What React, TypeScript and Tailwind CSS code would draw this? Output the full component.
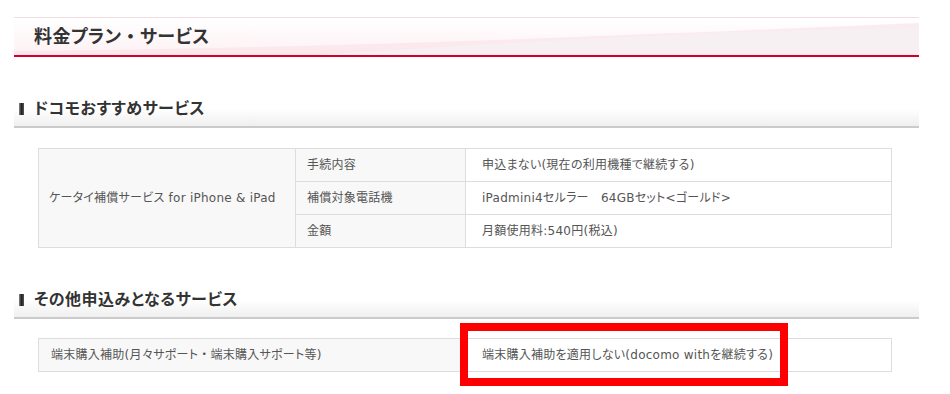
import type { ReactNode } from "react";

const font = "font-['DejaVu_Sans','Noto_Sans_CJK_JP',sans-serif]";

// middle dot keeps its full width like the reference font
function Dot() {
  return <span className="[font-feature-settings:normal]">・</span>;
}

function PageTitle({ children }: { children: ReactNode }) {
  return (
    <div className="relative h-[40px] overflow-hidden border-t border-b-2 border-t-[#f3dde3] border-b-[#d0002a] bg-gradient-to-b from-white to-[#fdf1f4]">
      {/* pink wave on the right */}
      <svg
        className="absolute inset-0 h-full w-full"
        viewBox="0 0 905 37"
        preserveAspectRatio="none"
      >
        <path d="M0 33 C300 30 560 20 905 5 L905 37 L0 37 Z" fill="#f8e1e7" opacity="0.6" />
        <path d="M300 37 C540 22 700 12 905 10 L905 37 Z" fill="#f6f1f3" opacity="0.8" />
      </svg>
      <h1 className="relative flex h-full items-center pl-[20px] text-[18px] font-bold tracking-[0.4px] text-[#333] [font-feature-settings:'palt']">
        {children}
      </h1>
    </div>
  );
}

function SectionTitle({ children }: { children: ReactNode }) {
  return (
    <div className="flex h-[36px] items-center gap-[10px] border-b-2 border-[#cbcbcb] bg-gradient-to-b from-white via-white to-[#efefef] pl-[5px]">
      <span className="h-[12px] w-[5px] bg-gradient-to-r from-[#888] via-[#222] to-[#555]" />
      <h2 className="text-[16px] font-bold tracking-[0.5px] text-[#333] [font-feature-settings:'palt']">
        {children}
      </h2>
    </div>
  );
}

export default function App() {
  const rows = [
    { label: "手続内容", value: "申込まない(現在の利用機種で継続する)" },
    { label: "補償対象電話機", value: "iPadmini4セルラー　64GBセット<ゴールド>" },
    { label: "金額", value: "月額使用料:540円(税込)" },
  ];

  return (
    <div className={`${font} min-h-[394px] bg-white px-[14px] pt-[17px] pr-[31px] text-[12px] text-[#555]`}>
      <PageTitle>
        料金プラン<Dot />サービス
      </PageTitle>

      <div className="mt-[35px]">
        <SectionTitle>ドコモおすすめサービス</SectionTitle>
      </div>

      <div className="mt-[20px] px-[24px] pr-[27px]">
        <table className="w-full border-collapse tracking-[0.25px] [font-feature-settings:'palt']">
          <tbody>
            {rows.map((r, i) => (
              <tr key={r.label} className="h-[33px]">
                {i === 0 && (
                  <td
                    rowSpan={3}
                    className="w-[257px] border border-[#dddddd] bg-[#f8f8f8] pl-[10px]"
                  >
                    ケータイ補償サービス for iPhone &amp; iPad
                  </td>
                )}
                <td className="w-[170px] border border-[#dddddd] bg-[#f8f8f8] pl-[11px]">
                  {r.label}
                </td>
                <td className="border border-[#dddddd] bg-white pl-[16px]">{r.value}</td>
              </tr>
            ))}
          </tbody>
        </table>
      </div>

      <div className="mt-[35px]">
        <SectionTitle>その他申込みとなるサービス</SectionTitle>
      </div>

      <div className="relative mt-[19px] px-[24px] pr-[27px]">
        <table className="w-full border-collapse tracking-[0.25px] [font-feature-settings:'palt']">
          <tbody>
            <tr className="h-[33px]">
              <td className="w-[427px] border border-[#dddddd] bg-[#f8f8f8] pl-[12px]">
                端末購入補助(月々サポート<Dot />端末購入サポート等)
              </td>
              <td className="border border-[#dddddd] bg-white pl-[16px]">
                端末購入補助を適用しない(docomo withを継続する)
              </td>
            </tr>
          </tbody>
        </table>
        {/* red highlight box */}
        <div className="pointer-events-none absolute left-[446px] top-[-15px] h-[63px] w-[328px] border-[8px] border-[#ff0000]" />
      </div>
    </div>
  );
}
